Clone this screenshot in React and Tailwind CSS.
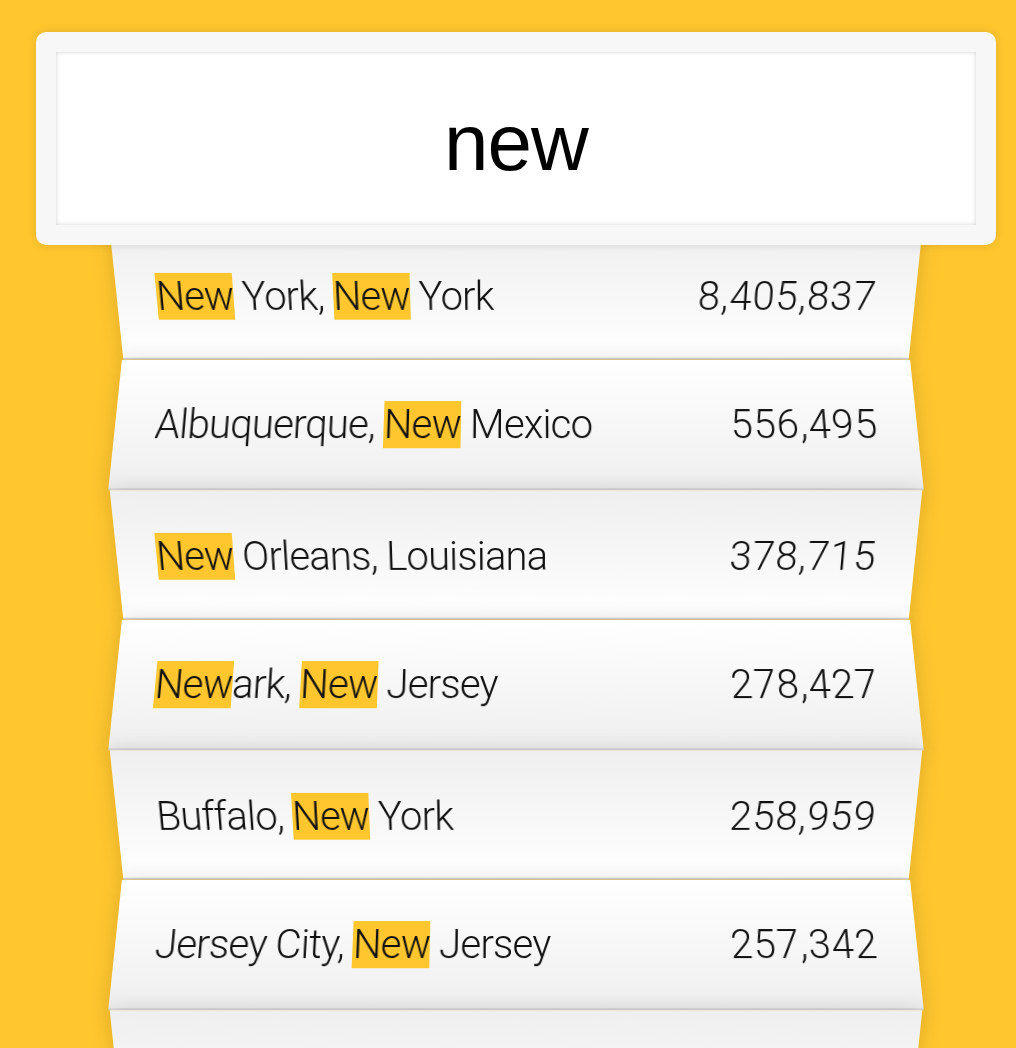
import React from "react";

const rows = [
  { parts: [["New", true], [" York, ", false], ["New", true], [" York", false]], pop: "8,405,837" },
  { parts: [["Albuquerque, ", false], ["New", true], [" Mexico", false]], pop: "556,495" },
  { parts: [["New", true], [" Orleans, Louisiana", false]], pop: "378,715" },
  { parts: [["New", true], ["ark, ", false], ["New", true], [" Jersey", false]], pop: "278,427" },
  { parts: [["Buffalo, ", false], ["New", true], [" York", false]], pop: "258,959" },
  { parts: [["Jersey City, ", false], ["New", true], [" Jersey", false]], pop: "257,342" },
  { parts: [["\u00a0", false]], pop: "" },
];

const ODD =
  "flex justify-between px-10 pt-[42px] pb-[38px] text-[40px] leading-[48px] font-light border-b-2 border-[#d8d8d8] shadow-[0_0_20px_rgba(0,0,0,0.14)] bg-linear-to-t from-white to-[#efefef] [transform:perspective(200px)_rotateX(-3deg)_translateY(6px)]";
const EVEN =
  "flex justify-between px-10 pt-[42px] pb-[38px] text-[40px] leading-[48px] font-light border-b-2 border-[#d8d8d8] shadow-[0_0_20px_rgba(0,0,0,0.14)] bg-linear-to-b from-white to-[#efefef] [transform:perspective(200px)_rotateX(3deg)_translateY(4px)_scale(1.001)]";

export default function App() {
  return (
    <div className="h-screen overflow-hidden bg-[#ffc62e] pl-4 flex justify-center font-['Roboto','Liberation_Sans',sans-serif] text-[#111]">
      <div className="w-[960px] pt-3">
        <div className="relative z-10 top-5">
          <input
            readOnly
            value="new"
            className="block w-full h-[213px] pt-2 bg-white border-[20px] border-[#f7f7f7] rounded-[10px] text-center text-[80px] tracking-[-1px] text-black font-['Liberation_Sans',sans-serif] outline-none shadow-[0_0_10px_rgba(0,0,0,0.12),inset_0_0_4px_rgba(0,0,0,0.19)]"
          />
        </div>
        <ul className="mx-20">
          {rows.map((r, i) => (
            <li key={i} className={i % 2 === 0 ? ODD : EVEN}>
              <span className="whitespace-pre tracking-[-0.8px]">
                {r.parts.map(([t, hl], j) =>
                  hl ? (
                    <span key={j} className="bg-[#ffc62e]">{t}</span>
                  ) : (
                    <span key={j}>{t}</span>
                  )
                )}
              </span>
              <span className="tracking-[0.9px] -mr-[1px]">{r.pop}</span>
            </li>
          ))}
        </ul>
      </div>
    </div>
  );
}
